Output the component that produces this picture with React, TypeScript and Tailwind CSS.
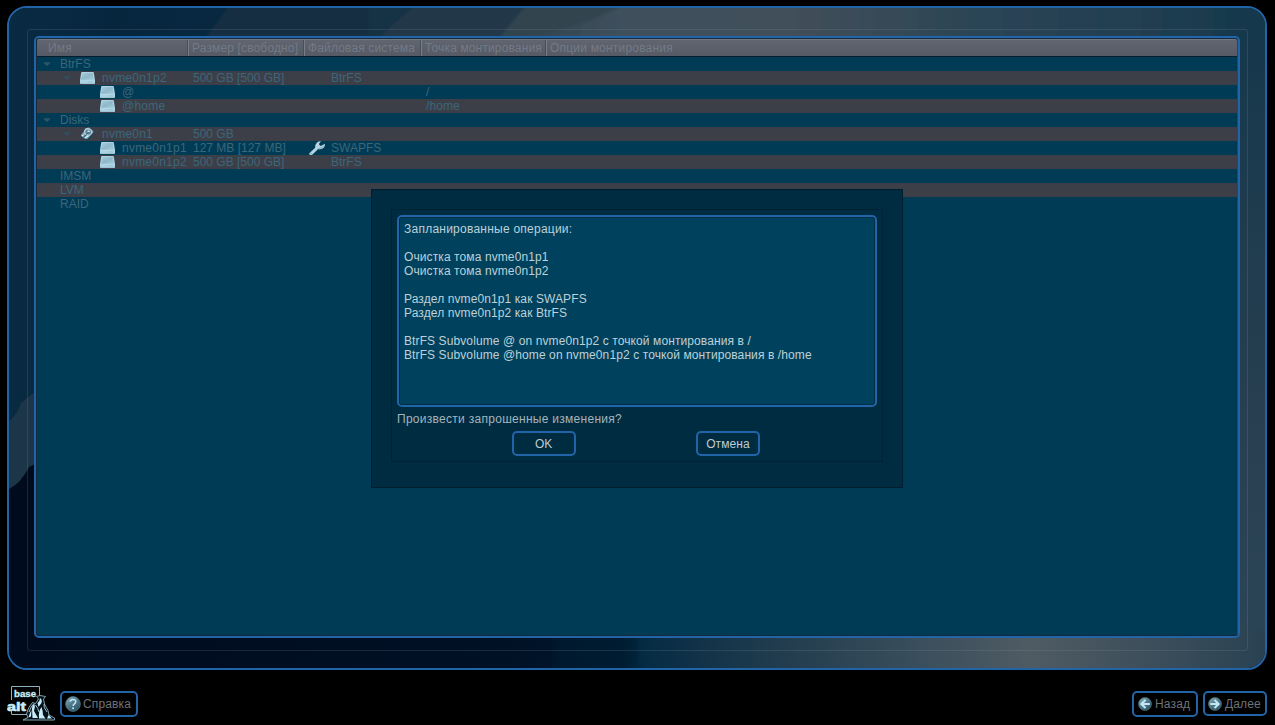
import type { ReactNode } from "react";

type Row = {
  name: string;
  indent: string;
  icon?: "volume" | "disk";
  arrow?: boolean;
  size?: string;
  fs?: string;
  format?: boolean;
  mount?: string;
};

const rows: Row[] = [
  { name: "BtrFS", indent: "pl-[5px]", arrow: true },
  { name: "nvme0n1p2", indent: "pl-[25px]", arrow: true, icon: "volume", size: "500 GB [500 GB]", fs: "BtrFS" },
  { name: "@", indent: "pl-[45px]", icon: "volume", mount: "/" },
  { name: "@home", indent: "pl-[45px]", icon: "volume", mount: "/home" },
  { name: "Disks", indent: "pl-[5px]", arrow: true },
  { name: "nvme0n1", indent: "pl-[25px]", arrow: true, icon: "disk", size: "500 GB" },
  { name: "nvme0n1p1", indent: "pl-[45px]", icon: "volume", size: "127 MB [127 MB]", fs: "SWAPFS", format: true },
  { name: "nvme0n1p2", indent: "pl-[45px]", icon: "volume", size: "500 GB [500 GB]", fs: "BtrFS" },
  { name: "IMSM", indent: "pl-[5px]" },
  { name: "LVM", indent: "pl-[5px]" },
  { name: "RAID", indent: "pl-[5px]" },
];

const columns = [
  { title: "Имя", style: "w-[152px] pl-[11px]" },
  { title: "Размер [свободно]", style: "w-[116px] pl-[3px]" },
  { title: "Файловая система", style: "w-[117px] pl-[3px]" },
  { title: "Точка монтирования", style: "w-[125px] pl-[3px]" },
];

const operations = [
  "Запланированные операции:",
  "",
  "Очистка тома nvme0n1p1",
  "Очистка тома nvme0n1p2",
  "",
  "Раздел nvme0n1p1 как SWAPFS",
  "Раздел nvme0n1p2 как BtrFS",
  "",
  "BtrFS Subvolume @ on nvme0n1p2 с точкой монтирования в /",
  "BtrFS Subvolume @home on nvme0n1p2 с точкой монтирования в /home",
];

function VolumeIcon() {
  return (
    <svg width="15" height="14" viewBox="0 0 15 14" className="block shrink-0">
      <defs>
        <linearGradient id="vol" x1="0" y1="0" x2="1" y2="1">
          <stop offset="0" stopColor="#a9cddc" />
          <stop offset="0.5" stopColor="#8fb9cb" />
          <stop offset="1" stopColor="#a3cbdb" />
        </linearGradient>
      </defs>
      <path d="M2 1H13Q13.6 1 13.8 1.8L15 9.2V12Q15 13 14 13H1Q0 13 0 12V9.2L1.2 1.8Q1.4 1 2 1Z" fill="#b4d9e8" />
      <path d="M2.2 1.7H12.8L14 8.8H1Z" fill="url(#vol)" />
      <path d="M0.4 9.6H14.6V12H0.4Z" fill="#abd2e1" />
      <path d="M8.5 10.9H13" stroke="#8cb5c7" strokeWidth="0.8" strokeDasharray="1 0.6" />
      <path d="M0.6 12.6H14.4" stroke="#85acbd" strokeWidth="0.5" />
    </svg>
  );
}

function DiskIcon() {
  return (
    <svg width="15" height="14" viewBox="0 0 15 14" className="block shrink-0">
      <path d="M0.8 8.8 6.6 1.2Q8 -0.2 9.6 0.9L13.4 4Q14.6 5.2 13.7 6.6L8.8 12.8Q7.2 14 5.6 13L1.4 10.6Q0.3 9.8 0.8 8.8Z" fill="#1c4257" />
      <path d="M1.1 7.7 6.6 1.2Q8 -0.1 9.5 0.8L12.9 3.7Q13.8 4.6 13 5.8L7.8 11.5Q6.4 12.5 5 11.7L1.5 9.3Q0.5 8.5 1.1 7.7Z" fill="#7fa5b6" />
      <ellipse cx="8.1" cy="4.9" rx="4.2" ry="3.7" transform="rotate(20 8.1 4.9)" fill="#b4d0dc" />
      <ellipse cx="8.2" cy="5" rx="3" ry="2.4" transform="rotate(20 8.2 5)" fill="#5c8496" />
      <ellipse cx="8.6" cy="4.6" rx="1.3" ry="1" fill="#d0e6ef" />
      <path d="M6 7.6 9 5.2" stroke="#2f586c" strokeWidth="0.9" />
      <path d="M2 9.2 3.6 7.6M5 10.6 8.4 8.9" stroke="#d3eaf3" strokeWidth="1.2" />
      <path d="M3.6 9.6 6.2 8.4" stroke="#2a5266" strokeWidth="1" />
    </svg>
  );
}

function WrenchIcon() {
  return (
    <svg width="16" height="14" viewBox="0 0 16 14" className="block shrink-0">
      <path
        d="M0.3 12.2 6.2 6.8Q5.9 3.6 8 1.4Q9.4 0.1 12 0L10.2 2.4Q9.8 4 11.2 4.7Q12.3 5 13.2 4.2L15.8 2.8Q16.2 5.4 14.3 7Q12.2 8.5 9.2 8.1L3.5 13.6Q2 14.4 0.8 13.7Q-0.2 13 0.3 12.2Z"
        fill="#b3d4e2"
      />
      <path d="M9 8.1Q12.2 8.5 14.3 7Q15.7 5.8 15.8 3.4L13.5 5.8Q10 7.4 8 7.2Z" fill="#8fb6c9" />
      <circle cx="2" cy="12.3" r="0.6" fill="#6a8fa1" />
    </svg>
  );
}

function RoundIcon({ kind }: { kind: "back" | "next" | "help" }) {
  return (
    <svg
      viewBox="0 0 16 16"
      className={kind === "help" ? "size-4 shrink-0" : "size-[14px] shrink-0"}
    >
      <defs>
        <linearGradient id={"round-" + kind} x1="0" y1="0" x2="0.7" y2="1">
          <stop offset="0" stopColor="#8fb6c6" />
          <stop offset="0.5" stopColor="#527b8c" />
          <stop offset="1" stopColor="#2c5565" />
        </linearGradient>
      </defs>
      <circle cx="8" cy="8" r="7.4" fill={`url(#round-${kind})`} stroke="#4a7080" strokeWidth="0.8" />
      {kind === "back" && <path d="M13.5 8H4.2M8.6 3.4 3.8 8 8.6 12.6" fill="none" stroke="#c3e6f3" strokeWidth="2.4" />}
      {kind === "next" && <path d="M2.5 8H11.8M7.4 3.4 12.2 8 7.4 12.6" fill="none" stroke="#c3e6f3" strokeWidth="2.4" />}
      {kind === "help" && (
        <>
          <path d="M5.2 5.8Q5.4 3.4 8 3.4Q10.8 3.4 10.8 5.6Q10.8 7 9.4 7.8Q8.1 8.6 8.1 10" fill="none" stroke="#c3e6f3" strokeWidth="1.5" />
          <circle cx="8.1" cy="12.2" r="1" fill="#c3e6f3" />
        </>
      )}
    </svg>
  );
}

function Logo() {
  return (
    <svg width="49" height="36" viewBox="0 0 49 36" className="shrink-0">
      <path d="M4.5 15V1.5H32.5V12M4.5 26V29.5H22" fill="none" stroke="#8fb0bd" />
      <text x="7" y="12.2" fontFamily="Liberation Sans" fontWeight="700" fontSize="8.5" textLength="22" lengthAdjust="spacingAndGlyphs" fill="#c6edfa" stroke="#c6edfa" strokeWidth="0.3">
        base
      </text>
      <text x="0" y="25.6" fontFamily="Liberation Sans" fontWeight="700" fontSize="12" textLength="19" lengthAdjust="spacingAndGlyphs" fill="#c6edfa" stroke="#c6edfa" strokeWidth="0.6">
        alt
      </text>
      <path d="M16 35 21 32.5 19.5 29Q21 22 25.5 17.5L28.5 18.5 31.5 14 29.5 11.5 33 10.5 38.5 11.5 36.5 14 37.5 19Q39 22 41 25.5L42 30 47.5 33V35Z" fill="#051118" stroke="#8fb3c2" strokeWidth="0.9" />
      <path d="M21.5 32.5Q22.5 28 24.5 25L24 31.5ZM25 24Q25 20 27.5 19Q28.5 22 27 26L31 33H25.5ZM32 33.5Q31 27 34.5 22Q36 26 36 30L38.5 33.5ZM30.5 18Q33 16.5 33 13Q35.5 14.5 34.5 18L31.5 22ZM40 33.5 41.5 30 45 33.5Z" fill="#c6edfa" />
      <path d="M22 27Q24 21 27 18.5M28.5 20Q31 23 32 27M37 19Q36 22 40 27" fill="none" stroke="#c6edfa" strokeWidth="0.8" />
    </svg>
  );
}

function Wallpaper() {
  return (
    <svg viewBox="0 0 1256 660" preserveAspectRatio="none" className="absolute inset-0 size-full">
      <defs>
        <linearGradient id="sky" x1="0" y1="0" x2="1" y2="0">
          <stop offset="0" stopColor="#092b42" />
          <stop offset="0.08" stopColor="#06263e" />
          <stop offset="0.3" stopColor="#092b42" />
          <stop offset="1" stopColor="#173a4e" />
        </linearGradient>
        <linearGradient id="haze" x1="0" y1="0" x2="1" y2="0">
          <stop offset="0" stopColor="#122d42" />
          <stop offset="0.16" stopColor="#132f43" />
          <stop offset="0.3" stopColor="#1f3749" />
          <stop offset="1" stopColor="#13374c" />
        </linearGradient>
        <linearGradient id="cloud" gradientUnits="userSpaceOnUse" x1="480" y1="0" x2="1256" y2="0">
          <stop offset="0" stopColor="#2c3f4f" />
          <stop offset="0.18" stopColor="#40505c" />
          <stop offset="0.42" stopColor="#3f4e59" />
          <stop offset="0.6" stopColor="#2d4555" />
          <stop offset="0.85" stopColor="#213e50" />
          <stop offset="1" stopColor="#13374c" />
        </linearGradient>
        <linearGradient id="ground" x1="0" y1="0" x2="1" y2="0">
          <stop offset="0" stopColor="#000b1e" />
          <stop offset="0.35" stopColor="#001024" />
          <stop offset="0.423" stopColor="#001328" />
          <stop offset="0.424" stopColor="#00182d" />
          <stop offset="0.48" stopColor="#001c32" />
          <stop offset="0.49" stopColor="#002239" />
          <stop offset="0.497" stopColor="#052b44" />
          <stop offset="0.6" stopColor="#203b4d" />
          <stop offset="0.7" stopColor="#354b5a" />
          <stop offset="0.81" stopColor="#4f5b63" />
          <stop offset="0.9" stopColor="#3e4f5b" />
          <stop offset="1" stopColor="#294253" />
        </linearGradient>
        <linearGradient id="edge" x1="0" y1="0" x2="0" y2="1">
          <stop offset="0" stopColor="#16384c" />
          <stop offset="0.6" stopColor="#273f50" />
          <stop offset="1" stopColor="#2c4556" />
        </linearGradient>
        <filter id="soft" x="-5%" y="-30%" width="110%" height="160%">
          <feGaussianBlur stdDeviation="1.5" />
        </filter>
      </defs>
      <path d="M0 0H1256V660H0Z" fill="url(#sky)" />
      <g filter="url(#soft)">
        <path d="M195 32 226 -10H1270V60H180Z" fill="url(#haze)" />
        <path d="M370 32Q385 12 420 -10H700V40H366Z" fill="#213849" />
        <path d="M480 40Q520 22 530 -10H1270V40Z" fill="url(#cloud)" />
        <path d="M490 30Q550 32 620 -6L520 -6Z" fill="#31444f" />
      </g>
      <path d="M0 413Q8 407 12 395Q21 388 28 382V500H0Z" fill="#1d3548" />
      <path d="M0 481Q12 475 20 459L40 449V660H0Z" fill="#000b1e" />
      <path d="M1210 25H1256V640H1210Z" fill="url(#edge)" />
      <path d="M20 620H1256V660H20Z" fill="url(#ground)" />
    </svg>
  );
}

function NavButton({ className, children }: { className: string; children: ReactNode }) {
  return (
    <button className={"flex items-center rounded-[5px] border-2 border-[#2164a8] tracking-[0.14px] text-[#6d7278] " + className}>
      {children}
    </button>
  );
}

function DeviceRow({ row }: { row: Row }) {
  return (
    <div className="flex h-[14px] items-center leading-[14px] text-[#3b667b] even:bg-[#3d3f48]">
      <div className={"flex w-[152px] shrink-0 items-center whitespace-nowrap " + row.indent}>
        {(row.arrow || !row.icon) && (
          <svg width="18" height="14" viewBox="0 0 18 14" className="shrink-0">
            {row.arrow && <path d="M1 5.2H9L5 9.2Z" fill={row.icon ? "#304f60" : "#2a5669"} />}
          </svg>
        )}
        {row.icon && (
          <span className={row.arrow ? "mr-[7px]" : "ml-[18px] mr-[7px]"}>
            {row.icon === "volume" ? <VolumeIcon /> : <DiskIcon />}
          </span>
        )}
        <span className={row.icon ? "tracking-[0.23px]" : ""}>{row.name}</span>
      </div>
      <div className="w-[116px] shrink-0 whitespace-nowrap pl-1">{row.size}</div>
      <div className="flex w-[117px] shrink-0 items-center pl-1">
        <span className="w-[22px]">{row.format && <WrenchIcon />}</span>
        {row.fs}
      </div>
      <div className="w-[125px] shrink-0 pl-1 tracking-[0.1px]">{row.mount}</div>
    </div>
  );
}

function ConfirmDialog() {
  return (
    <div className="absolute left-[371px] top-[189px] h-[299px] w-[532px] border border-[#001e30] bg-[#002c41] p-[19px] pb-[25px]">
      <div className="flex h-full flex-col border border-[#002234] p-[5px]">
        <div className="h-[192px] shrink-0 rounded-[5px] border-2 border-[#2164a8] bg-[#00425d]">
          <div className="h-full rounded-[3px] border border-[#002e46] px-1 pt-1 leading-[14px] tracking-[0.1px] text-[#bed0d8]">
            {operations.map((line, i) => (
              <p key={i} className="h-[14px] whitespace-nowrap first:tracking-[0.24px]">{line}</p>
            ))}
          </div>
        </div>
        <p className="mt-[5px] leading-[14px] tracking-[0.28px] text-[#a4b4bc]">Произвести запрошенные изменения?</p>
        <div className="mt-[5px] flex gap-[120px] pl-[115px] text-[#bfcbd1]">
          <button className="h-[25px] w-16 rounded-[5px] border-2 border-[#2164a8] pr-px tracking-[-0.2px]">OK</button>
          <button className="h-[25px] w-16 rounded-[5px] border-2 border-[#2164a8] tracking-[0.1px]">Отмена</button>
        </div>
      </div>
    </div>
  );
}

export default function App() {
  return (
    <div className="relative flex h-[725px] w-[1275px] flex-col overflow-hidden bg-black pl-[7px] pr-2 pt-[6px] font-['Liberation_Sans',Arial,sans-serif] text-[12px] leading-[14px]">
      <main className="relative h-[664px] shrink-0 overflow-hidden rounded-[20px] border-2 border-[#2164a8] py-[21px] pl-[18px] pr-[17px]">
        <Wallpaper />
        <section className="relative h-[622px] rounded-[3px] border border-[#8295a2]/20 px-[6px] pb-[12px] pt-[6px] pr-[7px]">
          <div className="flex h-[602px] flex-col rounded-[5px] border-2 border-[#2164a8] bg-[#003b55]">
            <div className="min-h-0 flex-1 overflow-hidden rounded-[3px] border border-[#152b3d] border-r-[#2b4557]">
              <div className="flex h-[18px] border-b border-b-[#071c2c] border-t border-t-[#737883] bg-linear-to-b from-[#60656f] to-[#555a65] leading-[16px] tracking-[0.14px] text-[#737a87]">
                {columns.map((column) => (
                  <div
                    key={column.title}
                    className={"shrink-0 whitespace-nowrap border-r border-r-[#787e88] shadow-[inset_-1px_0_#42505a] " + column.style}
                  >
                    {column.title}
                  </div>
                ))}
                <div className="pl-[3px] tracking-[0.2px]">Опции монтирования</div>
              </div>
              <div>
                {rows.map((row, i) => (
                  <DeviceRow key={i} row={row} />
                ))}
              </div>
            </div>
          </div>
        </section>
      </main>
      <footer className="mt-[15px] flex items-start">
        <Logo />
        <NavButton className="ml-1 mt-[6px] h-[26px] w-[78px] gap-[2px] pl-[3px]">
          <RoundIcon kind="help" />
          Справка
        </NavButton>
        <NavButton className="ml-auto mt-[6px] h-[26px] w-[66px] gap-[3px] pl-1">
          <RoundIcon kind="back" />
          Назад
        </NavButton>
        <NavButton className="ml-[5px] mt-[6px] h-[25px] w-16 gap-[3px] pl-[3px]">
          <RoundIcon kind="next" />
          Далее
        </NavButton>
      </footer>
      <ConfirmDialog />
    </div>
  );
}
